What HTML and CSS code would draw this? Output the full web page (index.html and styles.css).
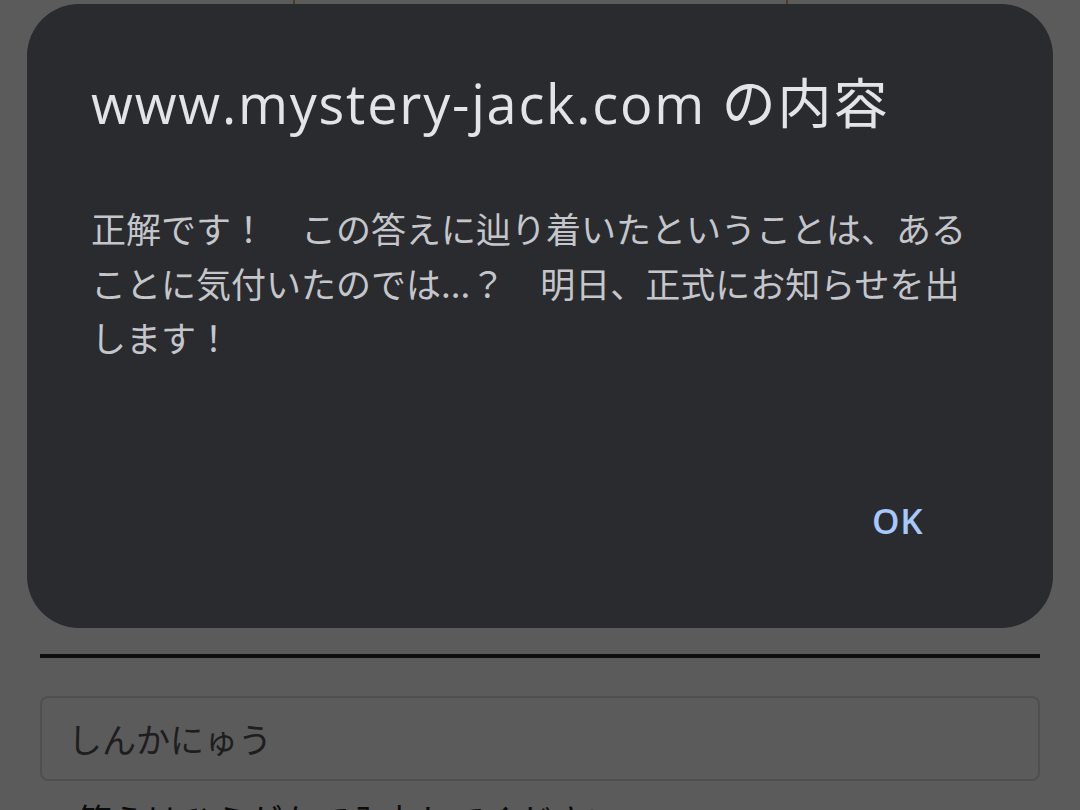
FILE: index.html
```html
<!DOCTYPE html>
<html lang="ja">
<head>
<meta charset="UTF-8">
<meta name="viewport" content="width=device-width, initial-scale=1.0">
<title>mystery-jack</title>
<link rel="stylesheet" href="styles.css">
</head>
<body>
  <div class="page">
    <!-- picture frame behind the dialog -->
    <div class="photo-frame"></div>
    <div class="rule"></div>
    <div class="answer-box">しんかにゅう</div>
    <p class="hint">答えはひらがなで入力してください。</p>
  </div>

  <!-- dim layer + alert -->
  <div class="overlay"></div>
  <div class="dialog">
    <h2 class="dialog-title">www.mystery-jack.com の内容</h2>
    <p class="dialog-message">正解です！　この答えに辿り着いたということは、あることに気付いたのでは...？　明日、正式にお知らせを出します！</p>
    <div class="dialog-actions">
      <button class="ok-button">OK</button>
    </div>
  </div>
</body>
</html>
```

FILE: styles.css
```css
body {
  margin: 0;
  background: #fff;
  font-family: "Noto Sans CJK JP", "Noto Sans", sans-serif;
  overflow: hidden;
}
.page {
  padding: 0 40px;
}
.photo-frame {
  width: 491px;
  height: 620px;
  margin: 0 auto;
  border-left: 2px solid #d9a860;
  border-right: 2px solid #d9a860;
}
.rule {
  height: 4px;
  margin-top: 34px;
  background: #2a2a2a;
}
.answer-box {
  margin-top: 38px;
  height: 81px;
  border: 2px solid #dcdcdc;
  border-radius: 8px;
  padding: 0 26px;
  display: flex;
  align-items: center;
  font-size: 34px;
  color: #555;
}
.hint {
  margin: 14px 0 0 38px;
  font-size: 34px;
  color: #222;
}
.overlay {
  position: fixed;
  inset: 0;
  background: rgba(0, 0, 0, 0.645);
}
.dialog {
  position: fixed;
  top: 4px;
  left: 27px;
  width: 1026px;
  height: 624px;
  box-sizing: border-box;
  padding: 65px 64px 0 64px;
  background: #2a2b2f;
  border-radius: 52px;
  display: flex;
  flex-direction: column;
}
.dialog-title {
  margin: 0;
  font-family: "Open Sans", "Noto Sans CJK JP", sans-serif;
  font-weight: 400;
  font-size: 54px;
  line-height: 68px;
  letter-spacing: 1.8px;
  color: #e4e4e6;
}
.dialog-message {
  margin: 64px 0 0;
  font-size: 35px;
  line-height: 54.5px;
  color: #c5c6ca;
}
.dialog-actions {
  margin-top: auto;
  display: flex;
  justify-content: flex-end;
  padding: 0 66px 84px 0;
}
.ok-button {
  background: none;
  border: none;
  padding: 0;
  font-family: "Open Sans", sans-serif;
  font-weight: 600;
  font-size: 35px;
  letter-spacing: 0.5px;
  color: #a8c7fa;
}
```
